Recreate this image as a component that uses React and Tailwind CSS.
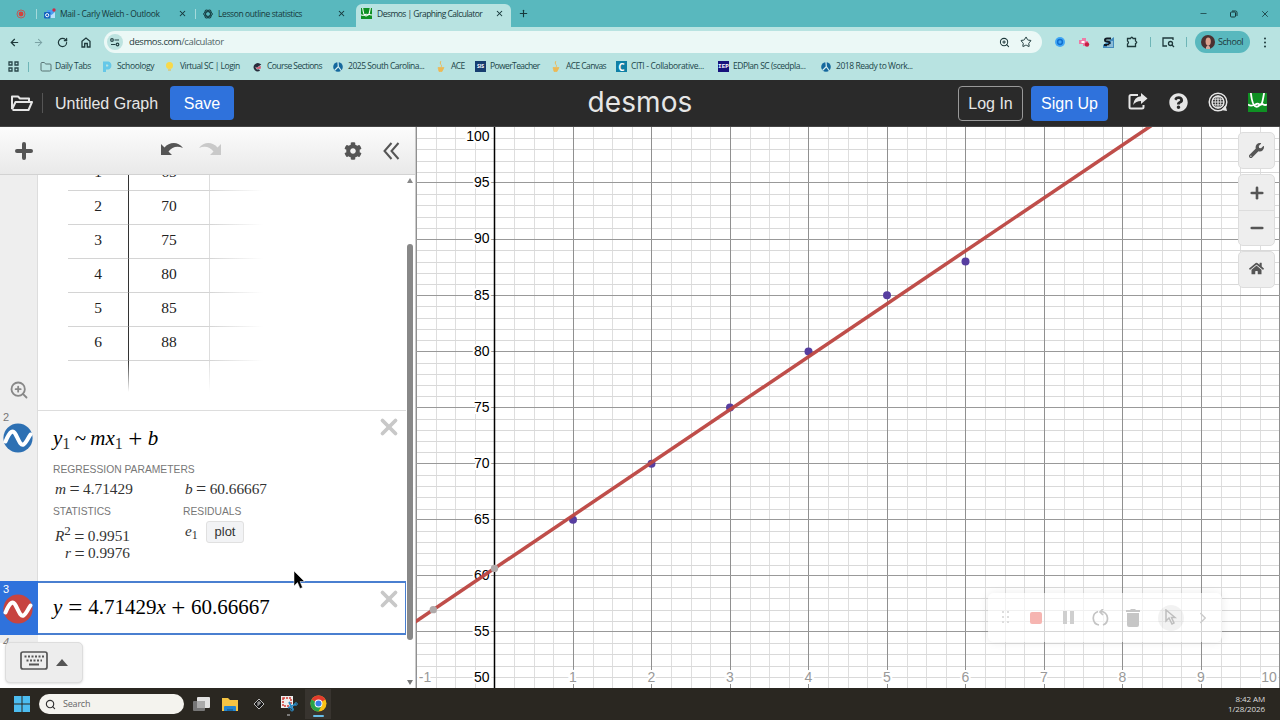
import React from 'react';
import { FaWrench, FaCog, FaHome, FaQuestionCircle } from 'react-icons/fa';
import { ArrowLeft, ArrowRight, RotateCw, X, Plus, Minus, Star, Search, ZoomIn, ChevronRight, Folder } from 'lucide-react';

const bookmarks = [
  { icon: 'folder', label: 'Daily Tabs', width: 'w-[62px]', track: 'tracking-[-0.45px]' },
  { icon: 'p', label: 'Schoology', width: 'w-[63px]', track: 'tracking-[-0.35px]' },
  { icon: 'bulb', label: 'Virtual SC | Login', width: 'w-[87px]', track: 'tracking-[-0.5px]' },
  { icon: 'course', label: 'Course Sections', width: 'w-[81px]', track: 'tracking-[-0.55px]' },
  { icon: 'sc', label: '2025 South Carolina...', width: 'w-[103px]', track: 'tracking-[-0.47px]' },
  { icon: 'ace', label: 'ACE', width: 'w-[39px]', track: 'tracking-[-0.6px]' },
  { icon: 'sis', label: 'PowerTeacher', width: 'w-[76px]', track: 'tracking-[-0.6px]' },
  { icon: 'ace', label: 'ACE Canvas', width: 'w-[65px]', track: 'tracking-[-0.6px]' },
  { icon: 'citi', label: 'CITI - Collaborative...', width: 'w-[102px]', track: 'tracking-[-0.35px]' },
  { icon: 'iep', label: 'EDPlan SC (scedpla...', width: 'w-[103px]', track: 'tracking-[-0.45px]' },
  { icon: 'sc', label: '2018 Ready to Work...', width: 'w-[100px]', track: 'tracking-[-0.45px]' },
];

const tableRows = [
  [1, 65],
  [2, 70],
  [3, 75],
  [4, 80],
  [5, 85],
  [6, 88],
];

// graph paper scale, in pixels of the plot area
const px = (x) => 78.5 + x * 78.5;
const py = (y) => 505 - (y - 55) * 11.225;
const fit = (x) => 4.71429 * x + 60.66667;

const DesmosMark = ({ size }) => (
  <svg width={size} height={size} viewBox="0 0 20 20">
    <rect width="20" height="20" fill="#0f9023" />
    <path d="M3 0C4 9 6 14.5 9 14.5S13 10.5 15 11.5S18 13.5 20 12M0 12C3 15 6 13 9 11.5S13 15 14.5 11S16 4 17 0" fill="none" stroke="#fff" strokeWidth="1.9" />
  </svg>
);

function BookmarkIcon({ type }) {
  switch (type) {
    case 'folder':
      return <Folder size={12} strokeWidth={1.8} color="#4d6668" />;
    case 'p':
      return (
        <svg width="11" height="11" viewBox="0 0 11 11">
          <path d="M2.5 11V2H6A2.6 2.6 0 0 1 6 7H3" fill="none" stroke="#65c8e8" strokeWidth="3" />
        </svg>
      );
    case 'bulb':
      return (
        <svg width="11" height="11" viewBox="0 0 11 11">
          <circle cx="4.5" cy="4.5" r="3.5" fill="#f8d94a" />
          <path d="M3 8H6V10H3Z" fill="#cfcf93" />
        </svg>
      );
    case 'course':
      return (
        <svg width="10" height="10" viewBox="0 0 10 10">
          <path d="M7.5 8A3.2 3.2 0 1 1 7.5 2.5L4 5" fill="none" stroke="#272c3b" strokeWidth="2" />
          <path d="M4.5 6H8V4" stroke="#d84562" strokeWidth="1.3" fill="none" />
        </svg>
      );
    case 'sc':
      return (
        <svg width="10" height="10" viewBox="0 0 10 10">
          <circle cx="5" cy="5" r="4.8" fill="#14689d" />
          <path d="M5 0L5.3 4.5L8.5 9M5 5L1.5 8.5" stroke="#d5eef0" strokeWidth="1.2" fill="none" />
        </svg>
      );
    case 'ace':
      return (
        <svg width="10" height="11" viewBox="0 0 10 11">
          <path d="M5 0C2.5 3 7 4 5 6M2 6.5H8L6 10.5H3Z" fill="#edb955" stroke="#edb955" strokeWidth="0.7" />
        </svg>
      );
    case 'sis':
      return <span className="grid h-[11px] w-[11px] place-items-center bg-[#163e70] text-[5px] font-bold text-white">SIS</span>;
    case 'citi':
      return <span className="grid h-[11px] w-[11px] place-items-center bg-[#0f7fa5] text-[10px] font-bold leading-none text-white">C</span>;
    default:
      return <span className="grid h-[11px] w-[11px] place-items-center bg-[#17127c] font-['Liberation_Mono'] text-[6px] font-bold text-white">IEP</span>;
  }
}

function TabStrip() {
  return (
    <div className="flex h-[27px] items-center bg-[#59b8be] text-[8.5px] text-[#17383b]">
      <div className="flex w-[44px] items-center justify-end gap-[10px] pr-[7px]">
        <svg width="10" height="10" viewBox="0 0 10 10">
          <circle cx="5" cy="5" r="4" fill="none" stroke="#c05a57" />
          <circle cx="5" cy="5" r="2.4" fill="#d2433e" />
        </svg>
        <span className="h-[10px] w-px bg-[#a5dadb]" />
      </div>
      <div className="flex w-[159px] items-center">
        <svg width="12" height="12" viewBox="0 0 12 12">
          <rect x="3" y="2" width="7" height="8" rx="1" fill="#4c9ef0" />
          <path d="M4 5L7.5 7L11 4V10H4Z" fill="#b9e0fb" />
          <rect y="4" width="6.5" height="6.5" rx="1" fill="#1463c0" />
          <circle cx="3.2" cy="7.2" r="1.6" fill="none" stroke="#fff" />
          <circle cx="10" cy="2" r="1.7" fill="#c92d4c" />
        </svg>
        <span className="w-[122px] whitespace-nowrap pl-1 pt-[2px] tracking-[-0.33px]">Mail - Carly Welch - Outlook</span>
        <X size={9} strokeWidth={2.8} />
        <span className="ml-[8px] h-[10px] w-px bg-[#a5dadb]" />
      </div>
      <div className="flex w-[158px] items-center">
        <svg width="10" height="10" viewBox="0 0 10 10" fill="none" stroke="#173f43" strokeWidth="1">
          <ellipse cx="5" cy="5" rx="4.3" ry="2.3" />
          <ellipse cx="5" cy="5" rx="4.3" ry="2.3" transform="rotate(60 5 5)" />
          <ellipse cx="5" cy="5" rx="4.3" ry="2.3" transform="rotate(120 5 5)" />
        </svg>
        <span className="w-[124px] whitespace-nowrap pl-[5px] pt-[2px] tracking-[-0.4px]">Lesson outline statistics</span>
        <X size={9} strokeWidth={2.8} />
      </div>
      <div className="-ml-[5px] mt-1 flex h-[23px] w-[155px] items-center rounded-t-md bg-[#b8e3e1] pb-1">
        <span className="pl-[5px]"><DesmosMark size={11} /></span>
        <span className="w-[123px] whitespace-nowrap pl-[5px] pt-[2px] tracking-[-0.53px]">Desmos | Graphing Calculator</span>
        <X size={9} strokeWidth={2.8} />
      </div>
      <Plus size={11} strokeWidth={2.5} className="ml-[7px]" />
      <div className="ml-auto flex items-center gap-[22px] pr-[10px]">
        <Minus size={9} />
        <svg width="8" height="8" viewBox="0 0 8 8" fill="none" stroke="#17383b">
          <rect x="0.5" y="2" width="5" height="5" rx="1" />
          <path d="M2 1H5.5Q7 1 7 2.5V6" />
        </svg>
        <X size={10} />
      </div>
    </div>
  );
}

function AddressBar() {
  return (
    <div className="flex h-[30px] items-center text-[#1e393b]">
      <div className="flex w-[104px] items-center gap-[13px] pl-[9px]">
        <ArrowLeft size={11} strokeWidth={2.6} />
        <ArrowRight size={11} strokeWidth={2.2} color="#7aa2a4" />
        <RotateCw size={11} strokeWidth={2.6} />
        <svg width="10" height="11" viewBox="0 0 10 11" fill="none" stroke="currentColor" strokeWidth="1.3">
          <path d="M1 4.2L5 1L9 4.2V10H6.3V6.5H3.7V10H1Z" />
        </svg>
      </div>
      <div className="flex h-[22px] w-[938px] items-center rounded-full bg-[#ebf8f6] pl-[3px] pr-[10px]">
        <span className="grid h-4 w-4 place-items-center rounded-full bg-[#bde3e0]">
          <svg width="10" height="9" viewBox="0 0 10 9" fill="none" stroke="#264447" strokeWidth="1.2">
            <circle cx="2" cy="2" r="1.3" />
            <path d="M4.5 2H9M1 6.5H5.5" />
            <circle cx="7.5" cy="6.5" r="1.3" />
          </svg>
        </span>
        <span className="pl-[6px] text-[9.5px] tracking-[-0.4px] text-[#506365]"><span className="text-[#263d40]">desmos.com</span>/calculator</span>
        <ZoomIn size={11} strokeWidth={2.2} className="ml-auto" />
        <Star size={12} strokeWidth={2} className="ml-[10px]" />
      </div>
      <svg width="10" height="10" viewBox="0 0 10 10" className="ml-[13px]">
        <circle cx="5" cy="5" r="5" fill="#42a7f5" />
        <circle cx="5" cy="5" r="2.4" fill="none" stroke="#0f6fd0" strokeWidth="1.5" />
      </svg>
      <svg width="12" height="11" viewBox="0 0 12 11" className="ml-[13px]">
        <path d="M1 3H4V1H8V4H10V9H5V7H1Z" fill="#ee7ca7" />
        <rect x="3.5" y="4" width="3" height="2" fill="#fff" />
        <circle cx="9" cy="7.5" r="2.2" fill="#c71f44" />
      </svg>
      <svg width="11" height="11" viewBox="0 0 11 11" className="ml-[13px]">
        <path d="M0 11V8L11 0V11Z" fill="#438bbd" />
        <path d="M8 1.5H4Q2 1.5 2 3T4 4.5H5Q7 5 6.5 6.5T4.5 8H1" fill="none" stroke="#101b25" strokeWidth="2" />
        <path d="M5 10V8M7 10V7M9 10V4" stroke="#d5eef2" />
      </svg>
      <svg width="12" height="12" viewBox="0 0 12 12" className="ml-[12px]" fill="none" stroke="currentColor" strokeWidth="1.3">
        <path d="M1.5 2.5H4.5Q5.8 0 7.1 2.5H9.5V5Q12 6.3 9.5 7.6V10.5H1.5V8Q3.5 6.5 1.5 5Z" />
      </svg>
      <span className="ml-[12px] h-[10px] w-px bg-[#6eb5b7]" />
      <svg width="13" height="11" viewBox="0 0 13 11" className="ml-[11px]" fill="none" stroke="currentColor" strokeWidth="1.3">
        <path d="M5 9H1V1H11V3M1 9V4" />
        <circle cx="8.5" cy="6.5" r="2" />
        <path d="M10 8L12 10" />
      </svg>
      <span className="ml-[11px] h-[10px] w-px bg-[#6eb5b7]" />
      <div className="ml-[8px] flex h-[22px] w-[55px] items-center rounded-full bg-[#59b8be] pl-[6px] text-[9px]">
        <svg width="14" height="14" viewBox="0 0 14 14">
          <circle cx="7" cy="7" r="7" fill="#4b3030" />
          <ellipse cx="7.2" cy="6.5" rx="2.6" ry="4" fill="#dba18e" />
          <path d="M5 12L7 10L9 12V14H5Z" fill="#d2a79b" />
        </svg>
        <span className="pl-[3px] tracking-[-0.45px]">School</span>
      </div>
      <svg width="4" height="11" viewBox="0 0 4 11" className="ml-[13px]" fill="currentColor">
        <circle cx="2" cy="1.5" r="1" />
        <circle cx="2" cy="5.5" r="1" />
        <circle cx="2" cy="9.5" r="1" />
      </svg>
    </div>
  );
}

function BookmarksBar() {
  return (
    <div className="flex h-[22px] items-center pb-[3px] text-[8.5px] text-[#21464a]">
      <svg width="11" height="11" viewBox="0 0 11 11" className="ml-2" fill="none" stroke="#29474a" strokeWidth="1.3">
        <path d="M1 1H4V4H1ZM7 1H10V4H7ZM1 7H4V10H1ZM7 7H10V10H7Z" />
      </svg>
      <span className="ml-[9px] mr-[11px] h-[10px] w-px bg-[#6eb5b7]" />
      {bookmarks.map((b, i) => (
        <div key={i} className={`flex shrink-0 items-center ${b.width}`}>
          <span className="flex w-[15px] shrink-0"><BookmarkIcon type={b.icon} /></span>
          <span className={`whitespace-nowrap ${b.track}`}>{b.label}</span>
        </div>
      ))}
    </div>
  );
}

function DesmosHeader() {
  return (
    <header className="grid h-[47px] grid-cols-3 items-center border-b border-[#444] bg-[#2a2a2a] font-['Liberation_Sans',sans-serif] text-[16px] text-[#e6e6e6]">
      <div className="flex items-center">
        <svg width="23" height="18" viewBox="0 0 23 18" className="ml-[10px]" fill="none" stroke="#e6e6e6" strokeWidth="2" strokeLinejoin="round">
          <path d="M2 15V2.5H8L10 4.5H19V7.5M2 15.5L5.5 8H22L18.5 16H2.5" />
        </svg>
        <span className="ml-[9px] h-5 w-px bg-[#555]" />
        <span className="ml-[12px] w-[115px] pt-px">Untitled Graph</span>
        <button className="h-[34px] w-16 rounded bg-[#2f72dc] pt-px text-white">Save</button>
      </div>
      <div className="pb-[2px] text-center font-[Inter,sans-serif] text-[28px] leading-none tracking-[0.1px]">desmos</div>
      <div className="flex items-center justify-end pr-[13px]">
        <button className="mr-2 h-[35px] w-[65px] rounded border border-[#999] pt-px">Log In</button>
        <button className="h-[35px] w-[77px] rounded bg-[#2f72dc] pt-px text-white">Sign Up</button>
        <svg width="20" height="18" viewBox="0 0 20 18" className="mb-[2px] ml-[20px]">
          <path d="M10 2H3Q1.5 2 1.5 3.5V14Q1.5 15.5 3 15.5H14Q15.5 15.5 15.5 14V12" fill="none" stroke="#e6e6e6" strokeWidth="2" />
          <path d="M13 0L19.5 5.5L13 11V8Q8 8 5 12Q6 4 13 3.3Z" fill="#e6e6e6" />
        </svg>
        <FaQuestionCircle size={19} className="mb-[2px] ml-[21px]" />
        <svg width="20" height="20" viewBox="0 0 20 20" className="mb-[2px] ml-[20px]" fill="none" stroke="#e6e6e6">
          <circle cx="10" cy="10" r="8.8" strokeWidth="1.5" />
          <circle cx="10" cy="10" r="5.9" strokeWidth="1.5" />
          <path d="M4 10H16M10 4V16" strokeWidth="1.2" />
          <path d="M5 7.3H15M5 12.7H15" strokeWidth="0.8" />
          <ellipse cx="10" cy="10" rx="2.8" ry="6" strokeWidth="0.9" />
          <path d="M13 18L19 19L17.5 13Z" fill="#e6e6e6" stroke="none" />
        </svg>
        <span className="mb-[2px] ml-[20px]"><DesmosMark size={19} /></span>
      </div>
    </header>
  );
}

const Wave = ({ color }) => (
  <svg width="30" height="30" viewBox="0 0 30 30">
    <circle cx="15" cy="15" r="14.6" fill={color} />
    <path d="M2.5 18.5C7 8 10 6 13 12S18 23 20.5 21.5S24.5 16 27.5 11.5" fill="none" stroke="#fff" strokeWidth="4" strokeLinecap="round" />
  </svg>
);

function ExpressionToolbar() {
  return (
    <div className="flex h-12 shrink-0 items-center border-b border-[#d2d2d2] bg-gradient-to-b from-[#fcfcfc] to-[#e9e9e9] text-[#555]">
      <Plus size={24} strokeWidth={4} className="ml-[12px]" />
      <svg width="22" height="14" viewBox="0 0 22 14" className="mb-[3px] ml-[125px]" fill="#555">
        <path d="M0 2V13H11L7.5 9.5C11 5 16 3.5 22 6C17 -1 8 0 3.5 5.5Z" />
      </svg>
      <svg width="22" height="14" viewBox="0 0 22 14" className="mb-[3px] ml-[16px]" fill="#c9c9c9">
        <path d="M22 2V13H11L14.5 9.5C11 5 6 3.5 0 6C5 -1 14 0 18.5 5.5Z" />
      </svg>
      <FaCog size={18} className="ml-[123px]" />
      <svg width="17" height="18" viewBox="0 0 17 18" className="ml-[21px]" fill="none" stroke="#555" strokeWidth="2">
        <path d="M8.5 1L1.5 9L8.5 17M15.5 1L8.5 9L15.5 17" />
      </svg>
    </div>
  );
}

function DataTable() {
  return (
    <div className="relative h-[236px] overflow-hidden border-b border-[#ddd]">
      <div className="-mt-[18px] ml-[30px] w-[195px]">
        {tableRows.map(([x, y]) => (
          <div key={x}>
            <div className="flex h-[33px] items-center text-[15.5px] text-[#222]">
              <span className="w-[60px] pb-1 text-center">{x}</span>
              <span className="w-px self-stretch bg-[#333]" />
              <span className="w-[80px] pb-1 text-center">{y}</span>
              <span className="w-px self-stretch bg-[#ddd]" />
            </div>
            <div className="flex h-px">
              <span className="w-[60px] bg-[#d4d4d4]" />
              <span className="w-px bg-[#666]" />
              <span className="w-[80px] bg-[#d4d4d4]" />
              <span className="flex-1 bg-gradient-to-r from-[#d4d4d4] to-transparent" />
            </div>
          </div>
        ))}
        <div className="flex h-[31px]">
          <span className="ml-[60px] w-px bg-gradient-to-b from-[#333] to-transparent" />
          <span className="ml-[80px] w-px bg-gradient-to-b from-[#ddd] to-transparent" />
        </div>
      </div>
    </div>
  );
}

// wide relation sign of a small result line
const Eq = () => <span className="inline-block w-[17px] text-center align-[-1.5px] text-[18px] leading-none">=</span>;

function Expressions() {
  return (
    <div className="flex min-h-0 flex-1 font-['Liberation_Serif',serif]">
      <div className="w-[406px]">
        <div className="flex">
          <div className="flex w-[38px] flex-col justify-end border-r border-[#ddd] bg-[#eee] pb-[11px] pl-[9px] text-[#888]">
            <ZoomIn size={20} strokeWidth={2.2} />
          </div>
          <div className="flex-1"><DataTable /></div>
        </div>

        <div className="flex h-[170px]">
          <div className="w-[38px] border-r border-[#ddd] bg-[#eee] pl-[3px]">
            <div className="h-[12px] pt-px font-['Liberation_Sans',sans-serif] text-[11px] leading-none text-[#777]">2</div>
            <Wave color="#2d70b3" />
          </div>
          <div className="flex-1 pl-[15px] text-[#333]">
            <div className="flex justify-between pr-[7px]">
              <div className="h-[50px] whitespace-nowrap pt-[12px] text-[21px] text-black">
                <i>y</i><sub className="text-[16px] text-[#333]">1</sub><span className="inline-block w-[20px] text-center">~</span><i>mx</i><sub className="text-[16px] text-[#333]">1</sub>
                <span className="inline-block w-[25px] text-center align-[-2px] text-[25px] leading-none">+</span><i>b</i>
              </div>
              <X size={26} strokeWidth={3.5} color="#c8c8c8" className="-mr-[3px] mt-[3px]" />
            </div>
            <div className="mt-[3px] font-['Liberation_Sans',sans-serif] text-[10.3px] leading-[12px] text-[#777]">REGRESSION PARAMETERS</div>
            <div className="mt-[3px] flex h-[20px] items-center pl-[2px] text-[15.3px]">
              <span className="w-[130px]"><i>m</i><Eq />4.71429</span>
              <span><i>b</i><Eq />60.66667</span>
            </div>
            <div className="mt-[7px] flex font-['Liberation_Sans',sans-serif] text-[10.3px] leading-[12px] text-[#777]">
              <span className="w-[130px]">STATISTICS</span>
              <span>RESIDUALS</span>
            </div>
            <div className="flex pl-[2px] text-[15.3px]">
              <div className="w-[130px] pt-[5px]">
                <div className="h-[20px] leading-[25px]"><i>R</i><sup className="text-[13px]">2</sup><Eq />0.9951</div>
                <div className="pl-[10px] leading-[20px]"><i>r</i><Eq />0.9976</div>
              </div>
              <div className="flex h-[22px] pt-[3px]">
                <span className="w-[21px] leading-[20px]"><i>e</i><sub className="text-[12px]">1</sub></span>
                <span className="grid h-[22px] w-[38px] place-items-center rounded-[3px] border border-[#e0e0e0] bg-[#f2f3f5] font-['Liberation_Sans',sans-serif] text-[13px]">plot</span>
              </div>
            </div>
          </div>
        </div>

        <div className="flex h-[54px]">
          <div className="w-[38px] bg-[#2f72dc] pl-[3px]">
            <div className="h-[13px] pt-[3px] font-['Liberation_Sans',sans-serif] text-[11px] leading-none text-white">3</div>
            <Wave color="#c74440" />
          </div>
          <div className="flex flex-1 items-center justify-between border-y-2 border-r border-[#4a7fd0] pl-[15px] pr-[3px] text-[21px] text-black">
            <div className="whitespace-nowrap">
              <i>y</i><span className="inline-block w-[26px] text-center align-[-2px] text-[25px] leading-none">=</span>4.71429<i>x</i><span className="inline-block w-[25px] text-center align-[-2px] text-[25px] leading-none">+</span>60.66667
            </div>
            <X size={26} strokeWidth={3.5} color="#c8c8c8" className="mb-[18px]" />
          </div>
        </div>

        <div className="relative h-[53px]">
          <div className="h-2 w-[38px] bg-[#eee] pl-[3px] font-['Liberation_Sans',sans-serif] text-[11px] italic leading-[14px] text-[#777]">4</div>
          <div className="absolute left-[5px] top-[7px] flex h-[41px] w-[78px] items-center rounded-[5px] border border-[#ddd] bg-[#ededed] pb-[5px] pl-[14px] shadow-sm">
            <svg width="28" height="19" viewBox="0 0 28 19" fill="none" stroke="#555">
              <rect x="1" y="1" width="26" height="17" rx="2" strokeWidth="1.7" />
              <path d="M4.5 5.5H24" strokeWidth="2" strokeDasharray="2 1.5" />
              <path d="M6.5 9.5H22" strokeWidth="2" strokeDasharray="2 1.5" />
              <path d="M9 13.5H19" strokeWidth="2" />
            </svg>
            <svg width="12" height="7" viewBox="0 0 12 7" className="ml-[8px] mt-[4px]"><path d="M0 7L6 0L12 7Z" fill="#555" /></svg>
          </div>
        </div>
      </div>
      <div className="flex w-[8px] flex-col items-center pt-[3px]">
        <svg width="6" height="5" viewBox="0 0 6 5"><path d="M0 5L3 0L6 5Z" fill="#888" /></svg>
        <div className="mt-[61px] h-[396px] w-[6px] rounded-full bg-[#888]" />
        <svg width="6" height="5" viewBox="0 0 6 5" className="mb-[3px] mt-auto"><path d="M0 0L3 5L6 0Z" fill="#777" /></svg>
      </div>
    </div>
  );
}

function GraphPaper() {
  const cols = Array.from({ length: 46 }, (_, i) => (i - 4) / 4);
  const rows = Array.from({ length: 50 }, (_, i) => i + 50);
  return (
    <svg width="864" height="561" viewBox="0 0 864 561" className="block bg-white font-['Liberation_Sans',sans-serif] text-[14px]">
      {cols.filter((x) => x % 1 !== 0).map((x) => (
        <path key={x} d={`M${Math.round(px(x)) + 0.5} 0V561`} stroke="#dedede" />
      ))}
      {rows.filter((y) => y % 5 !== 0).map((y) => (
        <path key={y} d={`M0 ${Math.round(py(y)) + 0.5}H864`} stroke="#d9d9d9" />
      ))}
      {cols.filter((x) => x % 1 === 0 && x !== 0).map((x) => (
        <path key={x} d={`M${Math.floor(px(x)) + 0.5} 0V561`} stroke="#909090" />
      ))}
      {rows.filter((y) => y % 5 === 0).map((y) => (
        <path key={y} d={`M0 ${Math.floor(py(y) - 0.01) + 0.5}H864`} stroke="#999" />
      ))}
      <path d={`M${px(0)} 0V561`} stroke="#000" strokeWidth="1.5" />
      <g fill="#000" stroke="#fff" strokeWidth="4" paintOrder="stroke" textAnchor="end">
        {[55, 60, 65, 70, 75, 80, 85, 90, 95].map((y) => (
          <text key={y} x="73.5" y={py(y) + 4.3}>{y}</text>
        ))}
        <text x="73.5" y="14">100</text>
        <text x="73.5" y="555">50</text>
      </g>
      <g fill="#999" stroke="#fff" strokeWidth="4" paintOrder="stroke" textAnchor="middle">
        {[1, 2, 3, 4, 5, 6, 7, 8, 9].map((x) => (
          <text key={x} x={px(x)} y="555">{x}</text>
        ))}
        <text x="9" y="555">-1</text>
        <text x="853" y="555">10</text>
      </g>
      {tableRows.map(([x, y]) => (
        <circle key={x} cx={px(x)} cy={py(y)} r="4" fill="#573ea0" />
      ))}
      <path d={`M${px(-1.1)} ${py(fit(-1.1))}L${px(8.6)} ${py(fit(8.6))}`} stroke="#bd4743" strokeWidth="3.5" opacity="0.96" />
      <circle cx={px(0)} cy={py(fit(0))} r="3.7" fill="#b0aaaa" />
      <circle cx={px(-0.78)} cy={py(fit(-0.78))} r="3.7" fill="#b0aaaa" />
    </svg>
  );
}

function GraphControls() {
  return (
    <div className="absolute right-[5px] top-[5px] flex w-[37px] flex-col gap-[5px] text-[#555]">
      <div className="grid h-[37px] place-items-center rounded-[5px] border border-[#ddd] bg-[#eee]"><FaWrench size={15} /></div>
      <div className="flex h-[72px] flex-col rounded-[5px] border border-[#ddd] bg-[#eee]">
        <span className="grid flex-1 place-items-center border-b border-[#ddd] pt-px"><Plus size={18} strokeWidth={3.5} /></span>
        <span className="grid flex-1 place-items-center"><Minus size={18} strokeWidth={3.5} /></span>
      </div>
      <div className="grid h-[37px] place-items-center rounded-[5px] border border-[#ddd] bg-[#eee] pb-[2px]"><FaHome size={15} /></div>
    </div>
  );
}

// nearly transparent screen recorder bar floating over the graph
function RecorderBar() {
  return (
    <div className="absolute left-[572px] top-[466px] flex h-[49px] w-[234px] items-center rounded-md bg-white/60 pl-[13px] text-[#ccc] shadow-[0_0_10px_rgba(0,0,0,0.08)]">
      <svg width="10" height="16" viewBox="0 0 10 16" fill="#ddd">
        <path d="M1 1H3V3H1ZM6 1H8V3H6ZM1 6H3V8H1ZM6 6H8V8H6ZM1 11H3V13H1ZM6 11H8V13H6Z" />
      </svg>
      <span className="ml-[19px] h-3 w-3 rounded-[2px] bg-[#f6b5b1]" />
      <span className="ml-[21px] h-[13px] w-[11px] border-x-4 border-[#cfcfcf]" />
      <svg width="18" height="18" viewBox="0 0 18 18" className="ml-[18px]" fill="none" stroke="#c4c4c4" strokeWidth="1.7">
        <path d="M6 2.5A7 7 0 0 0 7 16M11 16A7 7 0 0 0 9 2.5M11 0L8 3L11 6" />
      </svg>
      <svg width="14" height="18" viewBox="0 0 14 18" className="ml-[16px]" fill="#c6c6c6">
        <path d="M0 1H4L5 0H9L10 1H14V3H0ZM1 4H13V16Q13 18 11 18H3Q1 18 1 16Z" />
      </svg>
      <span className="ml-[18px] grid h-[26px] w-[26px] place-items-center rounded-full bg-black/5">
        <svg width="12" height="17" viewBox="0 0 12 17" fill="none" stroke="#bebebe" strokeWidth="1.5"><path d="M1 1V12L4 9L7 15L9 14L6.5 8.5H10Z" /></svg>
      </span>
      <ChevronRight size={18} className="ml-[10px]" />
    </div>
  );
}

function Taskbar() {
  return (
    <footer className="flex h-8 items-center bg-[#2a2721] text-[#ddd]">
      <svg width="16" height="16" viewBox="0 0 16 16" className="ml-[14px]" fill="#4dbdf0">
        <path d="M0 0H7.5V7.5H0ZM8.5 0H16V7.5H8.5ZM0 8.5H7.5V16H0ZM8.5 8.5H16V16H8.5Z" />
      </svg>
      <div className="ml-[9px] flex h-5 w-[145px] items-center rounded-full bg-[#f4f3ee] pl-[6px] text-[#333]">
        <Search size={11} strokeWidth={2.5} />
        <span className="pl-[7px] text-[9px] tracking-[-0.2px] text-[#666]">Search</span>
      </div>
      <svg width="17" height="15" viewBox="0 0 17 15" className="ml-[9px]">
        <rect y="4" width="12" height="10" rx="1" fill="#777" />
        <rect x="4" width="13" height="11" rx="1" fill="#e2e2e2" />
        <rect x="4" y="4" width="8" height="7" fill="#aaa" />
      </svg>
      <svg width="16" height="15" viewBox="0 0 16 15" className="ml-[12px]">
        <path d="M0 1H6L8 3H16V14H0Z" fill="#f5c443" />
        <path d="M2 14V10Q2 9 3 9H13Q14 9 14 10V14Z" fill="#2484cf" />
        <path d="M5 14V12H11V14Z" fill="#176aa8" />
      </svg>
      <svg width="14" height="14" viewBox="0 0 14 14" className="ml-[14px]" fill="none" stroke="#bbb">
        <path d="M7 2L12 7L7 12L2 7Z" fill="#151515" />
        <path d="M6 9V5H8V7H6" />
      </svg>
      <svg width="18" height="24" viewBox="0 0 18 24" className="ml-[14px]">
        <rect x="1" y="4" width="12" height="12" fill="#eee" />
        <rect x="3" y="6" width="8" height="8" fill="none" stroke="#d33d35" strokeWidth="1.5" strokeDasharray="2 1" />
        <path d="M9 10L13 18M16 12L8 16" stroke="#2b8bc5" strokeWidth="1.7" />
        <circle cx="12" cy="17.5" r="1.5" fill="none" stroke="#2b8bc5" />
        <circle cx="16" cy="12" r="1.3" fill="none" stroke="#2b8bc5" />
        <path d="M7 23H10" stroke="#999" strokeWidth="1.5" />
      </svg>
      <div className="ml-[7px] flex h-[30px] w-[26px] flex-col items-center bg-[#38342f] pt-[6px]">
        <svg width="17" height="17" viewBox="0 0 17 17" className="shrink-0">
          <circle cx="8.5" cy="8.5" r="8" fill="#fbc116" />
          <path d="M8.5 8.5L1.57 4.5A8 8 0 0 1 15.43 4.5Z" fill="#e33b2e" />
          <path d="M8.5 8.5L1.57 4.5A8 8 0 0 0 8.5 16.5L12 10Z" fill="#29a349" />
          <circle cx="8.5" cy="8.5" r="3.9" fill="#fff" />
          <circle cx="8.5" cy="8.5" r="3" fill="#377ee8" />
        </svg>
        <span className="mt-[3px] h-[2px] w-[11px] shrink-0 rounded bg-[#68bde8]" />
      </div>
      <div className="ml-auto pr-[15px] text-right text-[8px] leading-[10.5px] tracking-[-0.1px]">
        <div>8:42 AM</div>
        <div>1/28/2026</div>
      </div>
    </footer>
  );
}

export default function App() {
  return (
    <div className="relative h-[720px] w-[1280px] overflow-hidden bg-white font-['Open_Sans',sans-serif]">
      <TabStrip />
      <div className="h-[53px] bg-[#b8e3e1]">
        <AddressBar />
        <BookmarksBar />
      </div>
      <DesmosHeader />
      <main className="flex h-[561px]">
        <section className="flex w-[416px] flex-col border-r border-[#ccc] bg-white">
          <ExpressionToolbar />
          <Expressions />
        </section>
        <section className="relative flex-1">
          <GraphPaper />
          <GraphControls />
          <RecorderBar />
        </section>
      </main>
      <Taskbar />
      <svg width="12" height="20" viewBox="0 0 12 20" className="absolute left-[293px] top-[570px]">
        <path d="M1 1V16L4.5 12.5L7 18.5L9.5 17.5L7 11.5H11.5Z" fill="#000" stroke="#fff" strokeWidth="0.5" />
      </svg>
    </div>
  );
}
